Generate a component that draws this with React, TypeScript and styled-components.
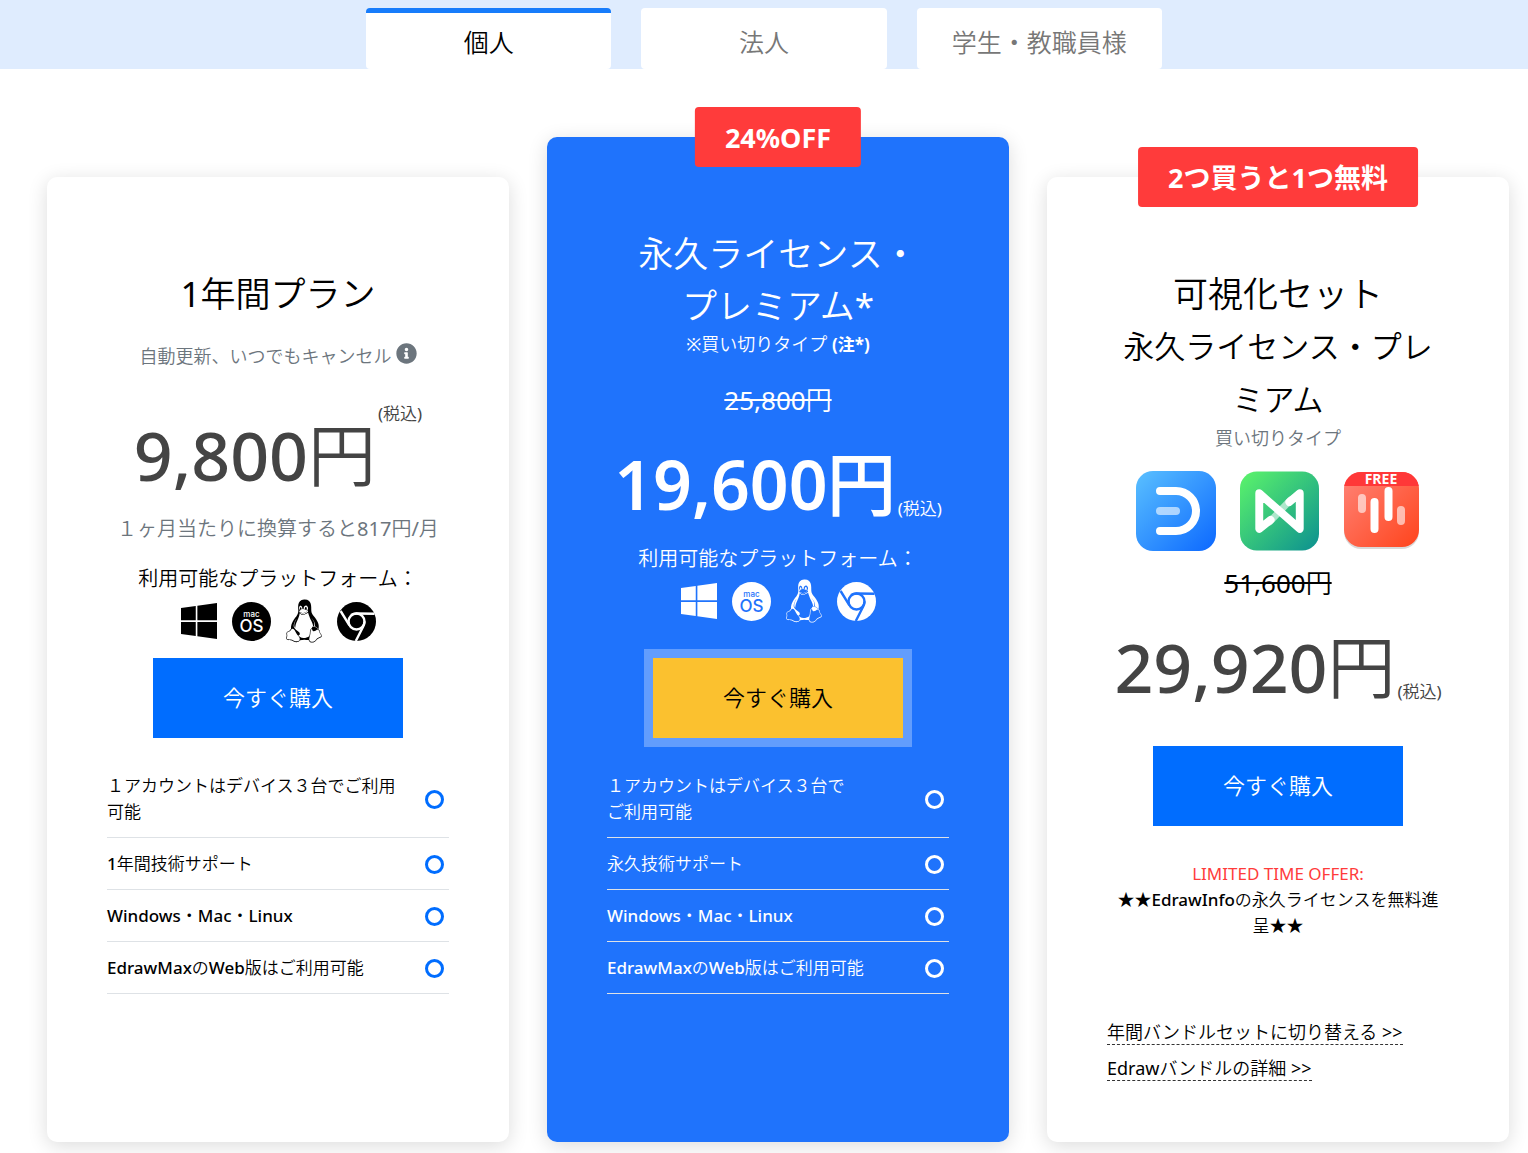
import React, { useState } from "react";
import styled, { createGlobalStyle, css } from "styled-components";
import { FaInfoCircle, FaWindows } from "react-icons/fa";
import { SiLinux } from "react-icons/si";

const GlobalStyle = createGlobalStyle`
  *, *::before, *::after { box-sizing: border-box; }
  body {
    margin: 0;
    background: #fff;
    color: #000;
    font-family: "Noto Sans", "Noto Sans CJK JP DemiLight", "Noto Sans CJK JP Light", "Noto Sans CJK JP", sans-serif;
    font-size: 17px;
    font-weight: 500;
    line-height: 26px;
  }
  h2, h3, p, ul { margin: 0; padding: 0; font-weight: inherit; }
  button { font: inherit; border: 0; cursor: pointer; }
`;

const TabBar = styled.header`
  padding-top: 8px;
  background: #dfecfe;
`;

const Tabs = styled.div`
  display: grid;
  grid-template-columns: repeat(3, 1fr);
  gap: 30px;
  max-width: 796px;
  margin: 0 auto;
`;

const Tab = styled.button<{ $active: boolean }>`
  height: 61px;
  padding: 1px 0 0;
  border-top: 5px solid ${(p) => (p.$active ? "#177cfb" : "#fff")};
  border-radius: 4px;
  background: #fff;
  color: ${(p) => (p.$active ? "#000" : "#777")};
  font-size: 25px;
  line-height: 36px;
`;

const Plans = styled.main`
  display: grid;
  grid-template-columns: repeat(3, minmax(0, 1fr));
  gap: 38px;
  padding: 68px 19px 11px 47px;
`;

const Card = styled.section<{ $featured?: boolean }>`
  position: relative;
  display: flex;
  flex-direction: column;
  align-items: center;
  margin-top: 40px;
  padding: 91px 60px 61px;
  border-radius: 10px;
  background: #fff;
  box-shadow: 0 4px 20px rgba(0, 0, 0, 0.14);
  text-align: center;
  ${(p) =>
    p.$featured &&
    css`
      margin-top: 0;
      background: #1f73fc;
      color: #fff;
    `}
`;

const Badge = styled.strong`
  position: absolute;
  top: -30px;
  left: 50%;
  transform: translateX(-50%);
  padding: 13px 30px 11px;
  border-radius: 4px;
  background: #ff3b3b;
  color: #fff;
  font-family: "Noto Sans", "Noto Sans CJK JP", sans-serif;
  font-size: 27px;
  font-weight: 700;
  line-height: 36px;
  white-space: nowrap;
`;

const Title = styled.h2`
  font-size: 35px;
  font-weight: 400;
  line-height: 52px;
`;

const SubTitle = styled.h3`
  padding: 0 10px;
  font-size: 31px;
  font-weight: 400;
  line-height: 53px;
`;

const Note = styled.p<{ $muted?: boolean; $gap?: number }>`
  margin-top: ${(p) => p.$gap ?? 0}px;
  color: ${(p) => (p.$muted ? "#6c757d" : "inherit")};
  font-size: 18px;
  font-weight: 400;
  line-height: 24px;
  white-space: nowrap;
  b { font-family: "Noto Sans", "Noto Sans CJK JP", sans-serif; font-size: 17px; font-weight: 700; }
  svg { width: 21px; height: 21px; margin-left: 4px; vertical-align: -1px; }
`;

const OldPrice = styled.del<{ $gap: number }>`
  margin-top: ${(p) => p.$gap}px;
  font-size: 26px;
  font-weight: 400;
  line-height: 40px;
`;

const PriceRow = styled.div<{ $top?: boolean; $featured?: boolean; $gap: number }>`
  display: flex;
  align-items: ${(p) => (p.$top ? "flex-start" : "flex-end")};
  gap: 2px;
  margin-top: ${(p) => p.$gap}px;
  color: ${(p) => (p.$featured ? "#fff" : "#444")};
  white-space: nowrap;
`;

const Price = styled.span<{ $top?: boolean; $bold?: boolean }>`
  padding-top: ${(p) => (p.$top ? 16 : 0)}px;
  font-size: 68px;
  font-weight: ${(p) => (p.$bold ? 600 : 500)};
  line-height: 76px;
`;

const Tax = styled.small`
  font-size: 17px;
  font-weight: 400;
`;

const Monthly = styled.p`
  margin-top: 21px;
  color: #6c757d;
  font-size: 20px;
  font-weight: 400;
  line-height: 30px;
  white-space: nowrap;
`;

const PlatformLabel = styled.p<{ $gap: number }>`
  margin-top: ${(p) => p.$gap}px;
  font-size: 20px;
  line-height: 30px;
  white-space: nowrap;
`;

const PlatformIcons = styled.div`
  display: flex;
  align-items: center;
  gap: 15px;
  height: 44px;
  margin-top: 5px;
`;

const LinuxIcon = styled(SiLinux)`
  width: 36px;
  height: 44px;
`;

const BuyButton = styled.button<{ $featured?: boolean; $gap: number }>`
  width: 250px;
  height: 80px;
  margin-top: ${(p) => p.$gap}px;
  padding: 0 0 3px;
  background: ${(p) => (p.$featured ? "#fbc12f" : "#006dff")};
  color: ${(p) => (p.$featured ? "#000" : "#fff")};
  box-shadow: ${(p) => (p.$featured ? "0 0 0 9px rgba(255, 255, 255, 0.3)" : "none")};
  font-size: 22px;
`;

const Features = styled.ul`
  align-self: stretch;
  margin-top: 22px;
  list-style: none;
  text-align: left;
`;

const Feature = styled.li`
  display: flex;
  align-items: center;
  justify-content: space-between;
  padding: 13px 5px 12px 0;
  border-bottom: 1px solid #dee2e6;
`;

const FeatureText = styled.span`
  max-width: 300px;
`;

const Ring = styled.span<{ $featured?: boolean }>`
  flex: none;
  width: 19px;
  height: 19px;
  border: 3px solid ${(p) => (p.$featured ? "#fff" : "#006dff")};
  border-radius: 50%;
`;

const Logos = styled.div`
  display: flex;
  align-items: center;
  gap: 24px;
  height: 80px;
  margin-top: 21px;
`;

const Offer = styled.p`
  margin-top: 35px;
  padding: 0 4px;
  em { color: #ff3b3b; font-style: normal; font-weight: 400; }
`;

const Links = styled.nav`
  display: flex;
  flex-direction: column;
  align-items: flex-start;
  align-self: stretch;
  gap: 12px;
  margin-top: 82px;
`;

const DashedLink = styled.a`
  border-bottom: 1px dashed #333;
  color: #000;
  font-size: 18px;
  font-weight: 400;
  line-height: 23px;
  text-decoration: none;
`;

const MacIcon = ({ cut }: { cut: string }) => (
  <svg width="39" height="39" viewBox="0 0 39 39" aria-hidden="true">
    <circle cx="19.5" cy="19.5" r="19.5" fill="currentColor" />
    <g fill={cut} textAnchor="middle" fontFamily="Inter, sans-serif">
      <text x="19.5" y="15" fontSize="8" fontWeight="500">mac</text>
      <text x="19.5" y="30" fontSize="17" fontWeight="500">OS</text>
    </g>
  </svg>
);

const ChromeIcon = ({ cut }: { cut: string }) => (
  <svg width="39" height="39" viewBox="0 0 39 39" aria-hidden="true">
    <circle cx="19.5" cy="19.5" r="19.5" fill="currentColor" />
    <g fill="none" stroke={cut} strokeWidth="2.4">
      <circle cx="19.5" cy="19.5" r="8" />
      <path d="M14 13 Q16.500 11.500 19.500 11.500 L37.500 11.800" />
      <path d="M11.500 19.500 Q11.500 21.500 12.300 23.200 L3.600 9" />
      <path d="M27.500 19.500 Q27.500 22 26.200 24.500 L18.800 39" />
    </g>
  </svg>
);

const EdrawMaxLogo = () => (
  <svg width="80" height="80" viewBox="0 0 80 80" role="img" aria-label="EdrawMax">
    <defs>
      <linearGradient id="max" x1="0" y1="0" x2="1" y2="1">
        <stop offset="0" stopColor="#5ac0ff" />
        <stop offset="1" stopColor="#0c68ff" />
      </linearGradient>
    </defs>
    <rect width="80" height="80" rx="17" fill="url(#max)" />
    <path d="M24 20 H40 A20 20 0 0 1 40 60 H24" fill="none" stroke="#fff" strokeWidth="8" strokeLinecap="round" />
    <path d="M24 40 H40" stroke="#fff" strokeOpacity=".6" strokeWidth="8" strokeLinecap="round" />
  </svg>
);

const EdrawMindLogo = () => (
  <svg width="79" height="80" viewBox="0 0 80 80" role="img" aria-label="EdrawMind">
    <defs>
      <linearGradient id="mind" x1="0" y1="0" x2="1" y2="1">
        <stop offset="0" stopColor="#5cf56a" />
        <stop offset="1" stopColor="#0c9090" />
      </linearGradient>
    </defs>
    <rect width="80" height="80" rx="17" fill="url(#mind)" />
    <path d="M30 51 L51 29" stroke="#fff" strokeOpacity=".6" strokeWidth="7" strokeLinecap="round" />
    <path d="M31 49 L19.500 58 V22 L60.500 58 V22 L50 31" fill="none" stroke="#fff" strokeWidth="8" strokeLinecap="round" strokeLinejoin="round" />
  </svg>
);

const EdrawInfoLogo = () => (
  <svg width="78" height="88" viewBox="0 -4 78 88" role="img" aria-label="EdrawInfo">
    <defs>
      <linearGradient id="info" x1="0" y1="0" x2="1" y2="1">
        <stop offset="0" stopColor="#ff8478" />
        <stop offset="1" stopColor="#ff441c" />
      </linearGradient>
      <clipPath id="infoShape">
        <rect x="1" y="1" width="75" height="75" rx="17" />
      </clipPath>
    </defs>
    <rect x="1" y="3" width="75" height="75" rx="17" fill="#000" opacity=".15" />
    <g clipPath="url(#infoShape)">
      <rect x="1" y="1" width="75" height="75" fill="url(#info)" />
      <rect x="1" y="1" width="75" height="14" fill="#ff3838" />
    </g>
    <g stroke="#fff" strokeWidth="8" strokeLinecap="round">
      <path d="M19 27 V38 M58 39 V50" strokeOpacity=".6" />
      <path d="M31.500 31 V58 M45.500 20 V46" />
    </g>
    <text x="38" y="13" fill="#fff" fontFamily="Open Sans, sans-serif" fontSize="14" fontWeight="700" textAnchor="middle">FREE</text>
  </svg>
);

const Platforms = ({ cut, gap }: { cut: string; gap: number }) => (
  <>
    <PlatformLabel $gap={gap}>利用可能なプラットフォーム：</PlatformLabel>
    <PlatformIcons>
      <FaWindows viewBox="0 32 448 448" size={36} />
      <MacIcon cut={cut} />
      <LinuxIcon viewBox="2 0 20 24" />
      <ChromeIcon cut={cut} />
    </PlatformIcons>
  </>
);

const FeatureList = ({ items, featured }: { items: React.ReactNode[]; featured?: boolean }) => (
  <Features>
    {items.map((item, i) => (
      <Feature key={i}>
        <FeatureText>{item}</FeatureText>
        <Ring $featured={featured} />
      </Feature>
    ))}
  </Features>
);

const TAB_LABELS = ["個人", "法人", "学生・教職員様"];

export default function App() {
  const [tab, setTab] = useState(0);
  return (
    <>
      <GlobalStyle />
      <TabBar>
        <Tabs role="tablist">
          {TAB_LABELS.map((label, i) => (
            <Tab key={label} role="tab" aria-selected={i === tab} $active={i === tab} onClick={() => setTab(i)}>
              {label}
            </Tab>
          ))}
        </Tabs>
      </TabBar>
      <Plans>
        <Card>
          <Title>1年間プラン</Title>
          <Note $muted $gap={23}>
            自動更新、いつでもキャンセル
            <FaInfoCircle />
          </Note>
          <PriceRow $top $gap={33}>
            <Price $top>9,800円</Price>
            <Tax>(税込)</Tax>
          </PriceRow>
          <Monthly>１ヶ月当たりに換算すると817円/月</Monthly>
          <Platforms cut="#fff" gap={20} />
          <BuyButton $gap={15}>今すぐ購入</BuyButton>
          <FeatureList
            items={[
              "１アカウントはデバイス３台でご利用可能",
              "1年間技術サポート",
              "Windows・Mac・Linux",
              "EdrawMaxのWeb版はご利用可能",
            ]}
          />
        </Card>

        <Card $featured>
          <Badge>24%OFF</Badge>
          <Title>
            永久ライセンス・
            <br />
            プレミアム*
          </Title>
          <Note>
            ※買い切りタイプ <b>(注*)</b>
          </Note>
          <OldPrice $gap={23}>25,800円</OldPrice>
          <PriceRow $featured $gap={26}>
            <Price $bold>19,600円</Price>
            <Tax>(税込)</Tax>
          </PriceRow>
          <Platforms cut="#1f73fc" gap={22} />
          <BuyButton $featured $gap={35}>今すぐ購入</BuyButton>
          <FeatureList
            featured
            items={[
              <>
                １アカウントはデバイス３台で
                <br />
                ご利用可能
              </>,
              "永久技術サポート",
              "Windows・Mac・Linux",
              "EdrawMaxのWeb版はご利用可能",
            ]}
          />
        </Card>

        <Card>
          <Badge>2つ買うと1つ無料</Badge>
          <Title>可視化セット</Title>
          <SubTitle>永久ライセンス・プレミアム</SubTitle>
          <Note $muted>買い切りタイプ</Note>
          <Logos>
            <EdrawMaxLogo />
            <EdrawMindLogo />
            <EdrawInfoLogo />
          </Logos>
          <OldPrice $gap={12}>51,600円</OldPrice>
          <PriceRow $gap={26}>
            <Price>29,920円</Price>
            <Tax>(税込)</Tax>
          </PriceRow>
          <BuyButton $gap={41}>今すぐ購入</BuyButton>
          <Offer>
            <em>LIMITED TIME OFFER:</em>
            <br />
            ★★EdrawInfoの永久ライセンスを無料進呈★★
          </Offer>
          <Links>
            <DashedLink href="#annual-bundle">年間バンドルセットに切り替える &gt;&gt;</DashedLink>
            <DashedLink href="#bundle-details">Edrawバンドルの詳細 &gt;&gt;</DashedLink>
          </Links>
        </Card>
      </Plans>
    </>
  );
}
